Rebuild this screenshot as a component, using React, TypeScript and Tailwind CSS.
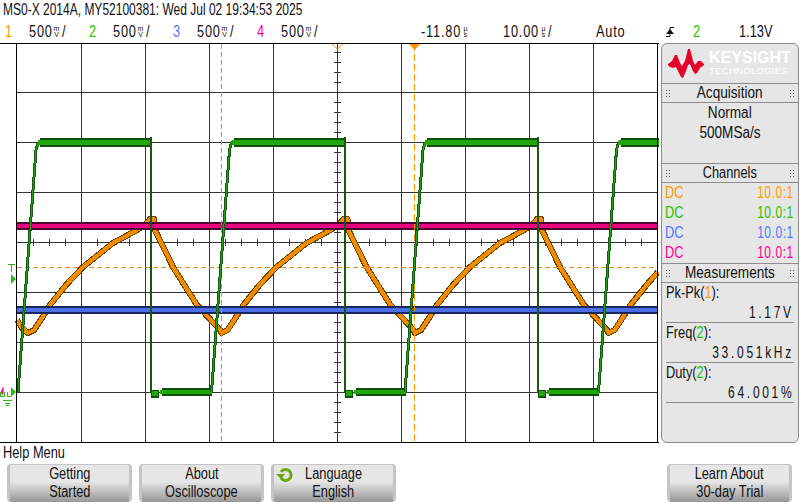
const PERIOD = 193.5;
const PLOT_W = 659;
const gridX = [81, 145, 209, 273, 337, 401, 465, 529, 593];
const gridY = [92, 142, 192, 242, 292, 342, 392];

// the scope's bitmap font is much narrower than anything installed
const nar = "inline-block origin-left scale-x-[0.8] whitespace-nowrap";
const narWide = "inline-block origin-left scale-x-[0.8] whitespace-nowrap tracking-[1px]";
const narCenter = "inline-block origin-center scale-x-[0.8] whitespace-nowrap";
const narPanel = "inline-block origin-center scale-x-[0.85] whitespace-nowrap";
const narRight = "inline-block origin-right scale-x-[0.75] whitespace-nowrap";

// one cycle of the ramp on channel 1, dx measured from the trough
const rampShape: [number, number][] = [
  [0, 333], [6, 330], [14, 318], [22, 305], [38, 285], [55, 267], [70, 255], [85, 243],
  [100, 235], [109, 230], [118, 224], [122, 219], [126, 219], [127, 230], [145, 267],
  [169, 305], [192, 330], [193.5, 333],
];

function rampPoints() {
  const pts: string[] = ["17,320", "22,328"];
  for (let i = 0; i < 4; i++) {
    for (const [dx, y] of rampShape) {
      const x = 28 + i * PERIOD + dx;
      if (x <= 658) pts.push(`${x},${y}`);
    }
  }
  pts.push("658,272");
  return pts.join(" ");
}

function Ticks() {
  const h: number[] = [];
  for (let x = 33; x < 657; x += 16) h.push(x);
  const v: number[] = [];
  for (let y = 52; y < 442; y += 10) v.push(y);
  return (
    <g stroke="#333" shapeRendering="crispEdges">
      {h.map((x) => (
        <line key={x} x1={x} x2={x} y1={239} y2={246} />
      ))}
      {v.map((y) => (
        <line key={y} x1={334} x2={341} y1={y + 0.5} y2={y + 0.5} />
      ))}
    </g>
  );
}

function GreenTrace() {
  const starts = [0, 1, 2, 3];
  return (
    <g shapeRendering="crispEdges" fill="none">
      {starts.map((i) => {
        const o = i * PERIOD;
        const rise = `${18 + o},392 ${36 + o},150 ${38 + o},143 ${41 + o},141`;
        return (
          <g key={i}>
            <polyline points={rise} stroke="#14590f" strokeWidth={3} />
            <polyline points={rise} stroke="#21a50a" strokeWidth={1} />
            <rect x={40 + o} y={138} width={i < 3 ? 112 : 41} height={9} fill="#0f4f0a" />
            <rect x={38 + o} y={140} width={i < 3 ? 114 : 43} height={5} fill="#20a806" />
            {i < 3 && (
              <>
                <line x1={151 + o} x2={151 + o} y1={137} y2={392} stroke="#14590f" strokeWidth={2} />
                <rect x={162 + o} y={388} width={50} height={8} fill="#0f4f0a" />
                <rect x={160 + o} y={390} width={52} height={4} fill="#20a806" />
                <rect x={151 + o} y={390} width={8} height={8} fill="#0f4f0a" />
                <rect x={152 + o} y={391} width={6} height={5} fill="#20a806" />
              </>
            )}
          </g>
        );
      })}
    </g>
  );
}

function Scope() {
  return (
    <svg viewBox={`0 43 ${PLOT_W} 400`} className="block h-[400px] w-[659px] shrink-0">
      <rect x={17} y={44} width={641} height={398} fill="#fff" />
      <g stroke="#333" shapeRendering="crispEdges">
        {gridX.map((x) => (
          <line key={x} x1={x + 0.5} x2={x + 0.5} y1={44} y2={442} />
        ))}
        {gridY.map((y) => (
          <line key={y} x1={17} x2={658} y1={y + 0.5} y2={y + 0.5} />
        ))}
      </g>
      <Ticks />
      <g fill="none" shapeRendering="crispEdges">
        <polyline points={rampPoints()} stroke="#6e4200" strokeWidth={6} strokeLinejoin="round" />
        <polyline points={rampPoints()} stroke="#ef8c00" strokeWidth={4} strokeLinejoin="round" />
      </g>
      <g shapeRendering="crispEdges">
        <rect x={17} y={306} width={641} height={8} fill="#17275e" />
        <rect x={17} y={308} width={641} height={4} fill="#4c6fe6" />
        <rect x={17} y={222} width={641} height={8} fill="#4d0530" />
        <rect x={17} y={224} width={641} height={4} fill="#e8007e" />
      </g>
      <g stroke="#f08c1e" strokeWidth={1} strokeDasharray="5 3" shapeRendering="crispEdges">
        <line x1={221.5} x2={221.5} y1={44} y2={442} />
        <line x1={17} x2={658} y1={267.5} y2={267.5} />
      </g>
      <line x1={414.5} x2={414.5} y1={44} y2={442} stroke="#ff9400" strokeDasharray="7 3" shapeRendering="crispEdges" />
      <GreenTrace />
      <polygon points="409,44 420,44 414.5,50" fill="#ff9400" />
      <polyline points="332,44 337.5,49 343,44" fill="none" stroke="#ff9400" />
      {/* trigger level */}
      <g stroke="#2fb80f" fill="none" shapeRendering="crispEdges">
        <line x1={8} x2={15} y1={264.5} y2={264.5} />
        <line x1={11.5} x2={11.5} y1={264} y2={272} />
        <line x1={7.5} x2={7.5} y1={392} y2={397} />
        <line x1={3} x2={12} y1={400.5} y2={400.5} />
        <line x1={5} x2={10} y1={403.5} y2={403.5} />
        <line x1={6} x2={9} y1={405.5} y2={405.5} />
        <line x1={8} x2={11} y1={396.5} y2={396.5} />
      </g>
      <polygon points="11,274 16,279 11,284" fill="#2fb80f" />
      <polygon points="11,387 16,392 11,397" fill="#2fb80f" />
      {/* stacked ground markers for the other channels */}
      <g shapeRendering="crispEdges">
        <rect x={0} y={392} width={4} height={4} fill="none" stroke="#2fb80f" />
        <rect x={2} y={388} width={1} height={7} fill="#ff0090" />
        <rect x={1} y={390} width={1} height={4} fill="#5577ff" />
        <rect x={3} y={387} width={1} height={6} fill="#ff9400" />
      </g>
      <g stroke="#000" shapeRendering="crispEdges">
        <line x1={0} x2={659} y1={43.5} y2={43.5} />
        <line x1={0} x2={659} y1={442.5} y2={442.5} />
        <line x1={16.5} x2={16.5} y1={44} y2={442} />
        <line x1={657.5} x2={657.5} y1={44} y2={442} />
      </g>
    </svg>
  );
}

function Unit({ top, bottom }: { top: string; bottom: string }) {
  return (
    <span className="inline-flex w-[7px] flex-col items-center text-[7px] leading-[6px]">
      <span>{top}</span>
      <span>{bottom}</span>
    </span>
  );
}

function ChannelScale({ n, color }: { n: number; color: string }) {
  return (
    <div className="flex w-[84px] shrink-0 items-center">
      <span className={`w-[24px] ${nar} ${color}`}>{n}</span>
      <span className="w-[24px]">
        <span className={narWide}>500</span>
      </span>
      <Unit top="m" bottom="V" />
      <span className={`ml-[2px] ${nar}`}>/</span>
    </div>
  );
}

function Grip() {
  return (
    <div className="grid grid-cols-2 gap-x-[2px] gap-y-[2px]">
      {[0, 1, 2, 3, 4, 5].map((i) => (
        <span key={i} className="h-px w-px bg-[#555]" />
      ))}
    </div>
  );
}

function SectionHeader({ title, textClass = narPanel }: { title: string; textClass?: string }) {
  return (
    <div className="flex h-[20px] shrink-0 items-center justify-between border-y border-[#8c8c8c] px-[4px]">
      <Grip />
      <span className={textClass}>{title}</span>
      <Grip />
    </div>
  );
}

function ChannelRow({ color }: { color: string }) {
  return (
    <div className={`flex h-[20px] items-center justify-between pl-[3px] pr-[4px] ${color}`}>
      <span className={nar}>DC</span>
      <span className={`${narRight} tracking-[0.7px]`}>10.0:1</span>
    </div>
  );
}

function Measurement({ label, n, color, value }: { label: string; n: number; color: string; value: string }) {
  return (
    <div className="mx-[4px] h-[40px] shrink-0 border-b border-[#8c8c8c]">
      <div className="h-[20px] leading-[20px]">
        <span className={nar}>
          {label}(<span className={color}>{n}</span>):
        </span>
      </div>
      <div className="h-[19px] text-right leading-[19px]">
        <span className={`${narRight} tracking-[3.6px]`}>{value}</span>
      </div>
    </div>
  );
}

function SidePanel() {
  return (
    <div className="ml-[2px] flex h-[400px] w-[138px] shrink-0 flex-col overflow-hidden rounded-[6px] border border-[#8c8c8c] bg-[#e6e6e6]">
      <div className="flex h-[39px] shrink-0 items-center gap-[4px] pl-[6px]">
        <svg viewBox="668 47 37 31" className="h-[31px] w-[37px] shrink-0">
          <polygon
            fill="#e4002b"
            points="668,63 672,60 675,54 677,54 680,62 682,65 685,60 688,48 690,48 693,60 695,64 698,60 701,60 704,63 704,64 700,67 697,72 695,73 693,70 690,63 688,64 686,70 683,77 681,76 678,70 676,66 673,67 670,66 668,64"
          />
        </svg>
        <div className="flex flex-col gap-[3px] text-white">
          <span className="text-[16px] font-bold leading-[12px]">KEYSIGHT</span>
          <span className="text-[9.5px] leading-[8px] tracking-[0.3px]">TECHNOLOGIES</span>
        </div>
      </div>
      <SectionHeader title="Acquisition" />
      <div className="h-[60px] shrink-0 text-center">
        <div className="h-[20px] leading-[20px]">
          <span className={narPanel}>Normal</span>
        </div>
        <div className="h-[20px] leading-[20px]">
          <span className={narPanel}>500MSa/s</span>
        </div>
      </div>
      <SectionHeader title="Channels" textClass={narCenter} />
      <div className="h-[80px] shrink-0">
        <ChannelRow color="text-[#ff9a00]" />
        <ChannelRow color="text-[#2ac000]" />
        <ChannelRow color="text-[#5577ff]" />
        <ChannelRow color="text-[#ff0090]" />
      </div>
      <SectionHeader title="Measurements" />
      <Measurement label="Pk-Pk" n={1} color="text-[#ff9a00]" value="1.17V" />
      <Measurement label="Freq" n={2} color="text-[#2ac000]" value="33.051kHz" />
      <Measurement label="Duty" n={2} color="text-[#2ac000]" value="64.001%" />
    </div>
  );
}

function SoftKey({ lines, icon }: { lines?: [string, string]; icon?: boolean }) {
  if (!lines) return <div className="w-[125px] shrink-0" />;
  return (
    <div className="relative flex h-[38px] w-[125px] shrink-0 flex-col items-center rounded-[4px] border-x-[3px] border-t border-[#c4c4c4] bg-gradient-to-b from-[#e6e6e6] from-45% to-[#979797] leading-[18px]">
      {icon && (
        <svg viewBox="0 0 18 16" className="absolute left-[2px] top-[2px] h-[16px] w-[18px]">
          <path d="M5 5 A5.5 5.5 0 1 1 5 11" fill="none" stroke="#6fa60a" strokeWidth={3} />
          <polygon points="0,7 9,7 5,12" fill="#6fa60a" />
        </svg>
      )}
      <span className={`h-[18px] ${narCenter}`}>{lines[0]}</span>
      <span className={`h-[18px] ${narCenter}`}>{lines[1]}</span>
    </div>
  );
}

export default function App() {
  return (
    <div className="h-[503px] w-[800px] overflow-hidden bg-white font-['Liberation_Sans',sans-serif] text-[16px] leading-[18px] text-[#111]">
      <div className="h-[43px]">
        <div className="h-[21px] pl-[3px] pt-[1px] leading-[18px]">
          <span className="inline-block origin-left scale-x-[0.75] whitespace-nowrap">
            MS0-X 2014A, MY52100381: Wed Jul 02 19:34:53 2025
          </span>
        </div>
        <div className="flex h-[22px] items-center pl-[5px]">
          <ChannelScale n={1} color="text-[#ff9a00]" />
          <ChannelScale n={2} color="text-[#2ac000]" />
          <ChannelScale n={3} color="text-[#5577ff]" />
          <ChannelScale n={4} color="text-[#ff0090]" />
          <div className="ml-[80px] flex w-[82px] items-center">
            <span className="w-[41px]">
              <span className={narWide}>-11.80</span>
            </span>
            <Unit top="µ" bottom="s" />
          </div>
          <div className="flex w-[93px] items-center">
            <span className="w-[37px]">
              <span className={narWide}>10.00</span>
            </span>
            <Unit top="µ" bottom="s" />
            <span className={`ml-[1px] ${nar}`}>/</span>
          </div>
          <div className="w-[69px]">
            <span className={narWide}>Auto</span>
          </div>
          <div className="w-[28px]">
            <svg viewBox="0 0 10 12" className="block h-[12px] w-[10px]">
              <path d="M1 10.5 H5 V1.5 H9" fill="none" stroke="#111" />
              <polygon points="1,8 9,8 5,3" fill="#111" />
            </svg>
          </div>
          <div className="w-[46px] text-[#2ac000]">
            <span className={nar}>2</span>
          </div>
          <div>
            <span className={nar}>1.13V</span>
          </div>
        </div>
      </div>
      <div className="flex">
        <Scope />
        <SidePanel />
      </div>
      <div className="h-[21px] pl-[3px] pt-[1px] leading-[18px]">
        <span className={nar}>Help Menu</span>
      </div>
      <div className="flex gap-[7px] pl-[7px]">
        <SoftKey lines={["Getting", "Started"]} />
        <SoftKey lines={["About", "Oscilloscope"]} />
        <SoftKey lines={["Language", "English"]} icon />
        <SoftKey />
        <SoftKey />
        <SoftKey lines={["Learn About", "30-day Trial"]} />
      </div>
    </div>
  );
}
